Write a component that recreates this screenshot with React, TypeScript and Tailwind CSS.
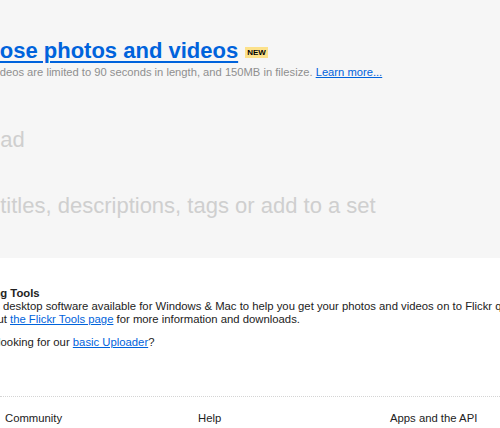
export default function App() {
  return (
    <div className="w-[500px] h-[428px] overflow-hidden bg-white font-['Liberation_Sans',Arial,sans-serif]">
      <div className="bg-[#f6f6f6] pt-[38px] pb-[40px]">
        <div className="ml-[-43px] whitespace-nowrap leading-[25px]">
          <a href="#" className="text-[22px] font-bold text-[#0063dc] underline underline-offset-[3px] decoration-[1.5px]">
            Choose photos and videos
          </a>
          <span className="ml-[7px] inline-block align-[3px] bg-[#fce18a] px-[2px] text-[8px] leading-[11px] font-bold text-black">
            NEW
          </span>
        </div>
        <p className="ml-[-10px] mt-0 whitespace-nowrap text-[11.2px] leading-[14px] text-[#8f8f8f]">
          Videos are limited to 90 seconds in length, and 150MB in filesize.{' '}
          <a href="#" className="text-[#0063dc] underline">Learn more...</a>
        </p>
        <div className="ml-[-45px] mt-[48px] whitespace-nowrap text-[22px] leading-[25px] text-[#cfcfcf]">Upload</div>
        <div className="ml-[-45px] mt-[41px] whitespace-nowrap text-[22px] leading-[25px] text-[#cfcfcf]">
          Add titles, descriptions, tags or add to a set
        </div>
      </div>

      <div className="mt-[29px] whitespace-nowrap text-[11.3px] leading-[13px] text-[#222]">
        <h3 className="ml-[-48px] font-bold">Uploading Tools</h3>
        <p className="ml-[-41px]">
          There is desktop software available for Windows &amp; Mac to help you get your photos and videos on to Flickr quickly and easily.
        </p>
        <p className="ml-[-44px]">
          Check out <a href="#" className="text-[#0063dc] underline">the Flickr Tools page</a> for more information and downloads.
        </p>
        <p className="ml-[-44px] mt-[10px]">
          Are you looking for our <a href="#" className="text-[#0063dc] underline">basic Uploader</a>?
        </p>
      </div>

      <div className="mt-[47px] border-t border-dotted border-[#d4d4d4]" />
      <div className="mt-[15px] flex pl-[5px] text-[11.3px] leading-[13px] text-[#222]">
        <div className="w-[193px] shrink-0">Community</div>
        <div className="w-[192px] shrink-0">Help</div>
        <div className="w-[193px] shrink-0 whitespace-nowrap">Apps and the API</div>
      </div>
    </div>
  )
}
